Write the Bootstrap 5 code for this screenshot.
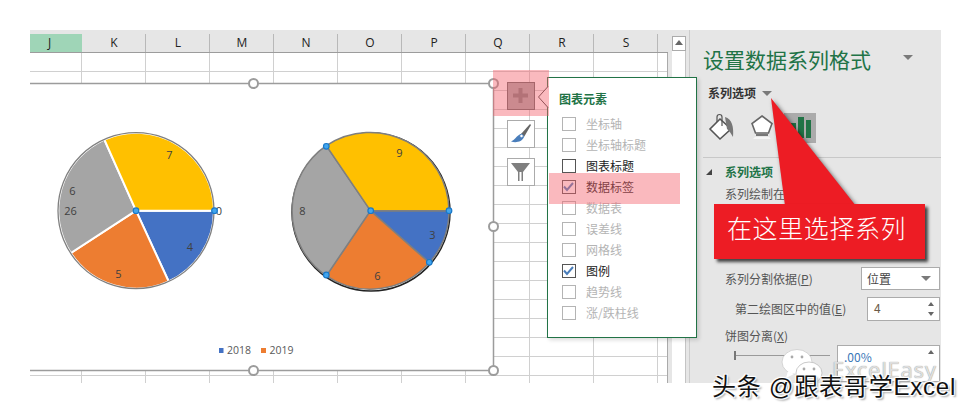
<!DOCTYPE html>
<html lang="zh-CN">
<head>
<meta charset="utf-8">
<title>设置数据系列格式</title>
<link href="https://cdn.jsdelivr.net/npm/bootstrap@5.3.0/dist/css/bootstrap.min.css" rel="stylesheet">
<style>
html,body{margin:0;background:#fff;overflow:hidden}
body{font-family:"Noto Sans CJK SC","Noto Sans",sans-serif;font-size:12px;line-height:18px;color:#444}
.stage{position:relative;width:971px;height:413px;padding:30px;overflow:hidden}
.shot{width:911px;height:353px;overflow:hidden}
.sheet{width:638px;flex:none;background:#e6e6e6;padding-top:4px}
.colhead{height:19px;border-bottom:1.5px solid #9c9c9c}
.colcell{width:64px;flex:none;text-align:center;border-right:1px solid #b8b8b8;font-family:"Open Sans",sans-serif;font-size:12px;line-height:17px;color:#222;padding-left:1px}
.colcell-sel{width:52px;background:#9fd5b7;border-right:0;padding-left:0;padding-right:13px}
.gridbody{height:330px;background-color:#fff;
 background-image:linear-gradient(90deg,#d0d0d0 1px,transparent 1px),linear-gradient(#d0d0d0 1px,transparent 1px);
 background-size:64px 100%,100% 19px;background-position:51px 0,0 18px;border-right:1.5px solid #aaa}
.scrollcol{width:21px;flex:none;background:#e6e6e6;padding:6px 3.5px 0 4px}
.scrollbtn{height:15px;background:#fff;border:1.5px solid #ababab;box-sizing:border-box}
.scrolltri{width:0;height:0;border:4px solid transparent;border-top:0;border-bottom:5px solid #666;margin:3px auto 0}
.scrolltrack{height:332px;background:#fff;border-right:1px solid #c4c4c4}
.fmtpanel{width:252px;flex:none;background:#e6e6e6;border-left:1.5px solid #ccc;padding-top:14px}
.fmttitle{font-size:21px;line-height:30px;color:#217346;padding-left:13px}
.dropcaret{width:0;height:0;border:5px solid transparent;border-top:5px solid #7a7a7a;border-bottom:0}
.caret-title{margin-left:32px;margin-top:-4px}
.subhead{font-weight:700;color:#333;padding-left:18px;margin-top:10px;gap:6px}
.iconrow{height:30px;margin-top:11px;padding-left:18px}
.iconslot{width:32px;height:30px;flex:none}
.iconslot-bucket{margin-right:11px}
.iconslot-penta{margin-right:1px}
.iconslot-sel{background:#ababab}
.fmtsep{height:1px;background:#c8c8c8;margin:14px 0 5px 13px}
.sect{font-weight:700;color:#217346;padding-left:35px;position:relative}
.secttri{position:absolute;left:16px;top:6px;width:0;height:0;border-style:solid;border-width:0 0 6px 6px;border-color:transparent transparent #444 transparent}
.fmtlabel{padding-left:35px;color:#555}
.fmtlabel-in{padding-left:45px}
.fmtrow{padding-right:1px}
.lowrow-a{margin-top:64px}
.lowrow-b{margin-top:7px}
.lowrow-c{margin-top:6px}
.selbox,.spinbox{background:#fff;border:1.5px solid #ababab;box-sizing:border-box}
.selbox{width:79px;height:23px;padding-left:5px;line-height:20px}
.spinbox{width:73px;height:24px;padding-left:6px;line-height:19px;color:#6b5a48}
.spinbox-wide{width:103px;height:37px;color:#3b78b8;padding-left:6px;line-height:21px}
.spinarrows{padding:4px 5px 0 0;gap:6px}
.spintri{width:0;height:0;border:3px solid transparent;border-top:0;border-bottom:4px solid #666}
.spintri-d{border-bottom:0;border-top:4px solid #666}
.sliderwrap{width:96px;height:20px;margin-left:44px}
.slidertick{width:2px;height:9px;background:#777}
.sliderline{height:1px;flex:1;background:#9a9a9a}
.overlay-svg{position:absolute;left:0;top:0;width:971px;height:413px}
.chartbtn{position:absolute;left:507px;width:28px;height:28px;background:#fff;border:1.5px solid #ababab}
.btn-plus{top:82px;background:#aaa;border-color:#666}
.btn-brush{top:120px}
.btn-filter{top:158px}
.chartmenu{position:absolute;left:547px;top:77px;width:150px;height:261px;background:#fff;border:1.5px solid #217346;box-shadow:2px 2px 4px rgba(0,0,0,.15);padding:11px 0 0 14px}
.menutitle{font-weight:700;color:#217346;line-height:20px;margin-bottom:4px;margin-left:-3px}
.menuitem{height:21px;gap:10px;color:#b4b4b4}
.menuitem-on{color:#222}
.chk{width:14px;height:14px;border:1.5px solid #b4b4b4;flex:none;background:#fff}
.menuitem-on .chk{border-color:#555}
.notch{position:absolute;left:537px;top:86px;width:12px;height:22px}
.pinkmask{position:absolute;background:rgba(245,100,110,.45)}
.pink-a{left:493px;top:70px;width:56px;height:46px}
.pink-b{left:549px;top:173px;width:131px;height:31px}
.calloutbox{position:absolute;left:714px;top:204px;width:211px;height:55px;background:#ed1c24;color:#fff;font-size:25px;letter-spacing:.6px;line-height:47px;padding-left:13px;box-shadow:3px 3px 3px #444;font-weight:300;white-space:nowrap}
.callout-arrow{position:absolute;left:0;top:0;width:971px;height:413px;filter:drop-shadow(2px 2px 2px rgba(0,0,0,.55))}
.wechatmark{position:absolute;left:780px;top:348px;width:46px;height:38px}
.easymark{position:absolute;left:832px;top:355px;font-family:"Noto Sans",sans-serif;font-size:22px;line-height:28px;letter-spacing:.7px;color:rgba(235,235,235,.9);text-shadow:0 0 1px #777}
.ttmark{position:absolute;left:712px;top:373px;font-size:24px;letter-spacing:.8px;line-height:28px;color:#111;white-space:nowrap;font-family:"Liberation Sans","Noto Sans CJK SC",sans-serif;text-shadow:1px 1px 1px #fff,-1px -1px 1px #fff,1px -1px 1px #fff,-1px 1px 1px #fff,2px 2px 2px #999}
</style>
</head>
<body>
<div class="stage">
  <div class="shot d-flex">
    <div class="sheet">
      <div class="colhead d-flex">
        <div class="colcell colcell-sel">J</div>
        <div class="colcell">K</div><div class="colcell">L</div><div class="colcell">M</div><div class="colcell">N</div>
        <div class="colcell">O</div><div class="colcell">P</div><div class="colcell">Q</div><div class="colcell">R</div><div class="colcell">S</div>
      </div>
      <div class="gridbody"></div>
    </div>
    <div class="scrollcol">
      <div class="scrollbtn"><div class="scrolltri"></div></div>
      <div class="scrolltrack"></div>
    </div>
    <div class="fmtpanel">
      <div class="d-flex align-items-center">
        <div class="fmttitle">设置数据系列格式</div>
        <div class="dropcaret caret-title"></div>
      </div>
      <div class="subhead d-flex align-items-center">系列选项 <span class="dropcaret"></span></div>
      <div class="iconrow d-flex align-items-center">
        <div class="iconslot iconslot-bucket">
          <svg width="32" height="30" viewBox="0 0 32 30"><path d="M12 6 L23 16 L12 26 L2 16 Z" fill="#fff" stroke="#555" stroke-width="1.6"/><path d="M9 9 V4 a2.500 2.500 0 0 1 5 0 V13" fill="none" stroke="#555" stroke-width="1.2"/><path d="M17 4 C24 6 26 14 25 24 C23 21 22 18 19 16 Z" fill="#777"/></svg>
        </div>
        <div class="iconslot iconslot-penta">
          <svg width="32" height="30" viewBox="0 0 32 30"><path d="M11 3 L21 10.500 L17.500 20 H4.500 L1 10.500 Z" fill="#fff" stroke="#666" stroke-width="1.600"/><path d="M5 22 H17" stroke="#777" stroke-width="2"/><path d="M4 24 L2 26 H20 L18 24 Z" fill="#f5f5f5"/></svg>
        </div>
        <div class="iconslot iconslot-sel">
          <svg width="32" height="30" viewBox="0 0 32 30"><rect x="7" y="10" width="5" height="15" fill="#217346"/><rect x="14" y="4" width="6" height="21" fill="#217346"/><rect x="22" y="7" width="5" height="18" fill="#217346"/></svg>
        </div>
      </div>
      <div class="fmtsep"></div>
      <div class="sect"><span class="secttri"></span>系列选项</div>
      <div class="fmtlabel mt-1">系列绘制在</div>
      <div class="fmtrow d-flex justify-content-between align-items-center lowrow-a">
        <div class="fmtlabel">系列分割依据(<u>P</u>)</div>
        <div class="selbox d-flex justify-content-between align-items-center">位置<span class="dropcaret me-2"></span></div>
      </div>
      <div class="fmtrow d-flex justify-content-between align-items-center lowrow-b">
        <div class="fmtlabel fmtlabel-in">第二绘图区中的值(<u>E</u>)</div>
        <div class="spinbox d-flex justify-content-between">4<div class="spinarrows d-flex flex-column"><span class="spintri"></span><span class="spintri spintri-d"></span></div></div>
      </div>
      <div class="fmtlabel lowrow-c">饼图分离(<u>X</u>)</div>
      <div class="fmtrow d-flex justify-content-between">
        <div class="sliderwrap d-flex align-items-center"><span class="slidertick"></span><span class="sliderline"></span></div>
        <div class="spinbox spinbox-wide d-flex justify-content-between">.00%<div class="spinarrows d-flex flex-column"><span class="spintri"></span></div></div>
      </div>
    </div>
  </div>

  <svg class="overlay-svg" viewBox="0 0 971 413" font-family="'Open Sans',sans-serif">
    <rect x="30" y="83" width="463" height="287" fill="#fff"/>
    <path d="M30 83.500 H493.500 V370.500 H30" fill="none" stroke="#9c9c9c" stroke-width="1.500"/>
    <g stroke="#fff" stroke-width="2">
      <path d="M136 210.700 L214 210.700 A78 78 0 0 1 168.700 281.500 Z" fill="#4472c4"/>
      <path d="M136 210.700 L168.700 281.500 A78 78 0 0 1 70.800 253 Z" fill="#ed7d31"/>
      <path d="M136 210.700 L70.800 253 A78 78 0 0 1 104.300 139.500 Z" fill="#a5a5a5"/>
      <path d="M136 210.700 L104.300 139.500 A78 78 0 0 1 214 210.700 Z" fill="#ffc000"/>
    </g>
    <circle cx="136" cy="210.700" r="78" fill="none" stroke="#808080" stroke-width="1.300"/>
    <circle cx="371" cy="212" r="79" fill="none" stroke="#222" stroke-width="1.500"/>
    <g stroke="#7f7f7f" stroke-width="1.500">
      <path d="M370.500 210.700 L449 210.700 A79 79 0 0 1 429.300 262.800 Z" fill="#4472c4"/>
      <path d="M370.500 210.700 L429.300 262.800 A79 79 0 0 1 326.300 275.800 Z" fill="#ed7d31"/>
      <path d="M370.500 210.700 L326.300 275.800 A79 79 0 0 1 326.300 145.600 Z" fill="#a5a5a5"/>
      <path d="M370.500 210.700 L326.300 145.600 A79 79 0 0 1 449 210.700 Z" fill="#ffc000"/>
    </g>
    <g font-size="11" fill="#404040" text-anchor="middle">
      <text x="169.500" y="159">7</text><text x="72.500" y="195">6</text><text x="70.500" y="215">26</text>
      <text x="190" y="251">4</text><text x="118.500" y="278">5</text><text x="219" y="215">0</text>
      <text x="399.500" y="157">9</text><text x="302.500" y="215">8</text><text x="432.500" y="239">3</text><text x="377.500" y="280">6</text>
    </g>
    <g fill="#41a5ee" stroke="#1a78c8" stroke-width="1.200">
      <circle cx="136" cy="210.700" r="2.800"/><circle cx="214.500" cy="210.700" r="2.800"/>
      <circle cx="370.700" cy="210.700" r="2.800"/><circle cx="449" cy="210.700" r="2.800"/><circle cx="429.300" cy="262.300" r="2.800"/><circle cx="326.300" cy="275" r="2.800"/><circle cx="326.300" cy="146.300" r="2.800"/>
    </g>
    <rect x="219" y="348" width="4.500" height="5" fill="#4472c4"/>
    <rect x="261" y="348" width="5" height="5" fill="#ed7d31"/>
    <g font-size="10.500" fill="#595959">
      <text x="227" y="354">2018</text><text x="269.500" y="354">2019</text>
    </g>
    <g fill="#fff" stroke="#9c9c9c" stroke-width="2">
      <circle cx="253.500" cy="83.500" r="4.500"/><circle cx="493.500" cy="83.500" r="4.500"/><circle cx="493.500" cy="226.500" r="4.500"/><circle cx="493.500" cy="370.500" r="4.500"/><circle cx="253.500" cy="370.500" r="4.500"/>
    </g>
  </svg>

  <div class="chartbtn btn-plus">
    <svg width="25" height="25" viewBox="0 0 25 25"><path d="M10.500 5 H14.500 V10.500 H20 V14.500 H14.500 V20 H10.500 V14.500 H5 V10.500 H10.500 Z" fill="#7f7f7f"/></svg>
  </div>
  <div class="chartbtn btn-brush">
    <svg width="25" height="25" viewBox="0 0 25 25"><path d="M13 13 L22 3 L23 4 L16 16 Z" fill="#666"/><path d="M13 13 L16 16 C14 21 8 22 3 20.500 C7 19 8 15 13 13 Z" fill="#4a7ebb"/><circle cx="13.500" cy="15" r="1.800" fill="#fff" stroke="#4a7ebb"/></svg>
  </div>
  <div class="chartbtn btn-filter">
    <svg width="25" height="25" viewBox="0 0 25 25"><path d="M3 4 H22 L15 13 V22 H10 V13 Z" fill="#7f7f7f"/><path d="M11.500 13 H13.500 V22 H11.500 Z" fill="#fff"/></svg>
  </div>

  <div class="chartmenu">
    <div class="menutitle">图表元素</div>
    <div class="menuitem d-flex align-items-center"><span class="chk"></span>坐标轴</div>
    <div class="menuitem d-flex align-items-center"><span class="chk"></span>坐标轴标题</div>
    <div class="menuitem menuitem-on d-flex align-items-center"><span class="chk"></span>图表标题</div>
    <div class="menuitem menuitem-on d-flex align-items-center"><span class="chk"><svg class="d-block" width="11" height="11" viewBox="0 0 11 11"><path d="M1 5.500 L4 9 L10 2" fill="none" stroke="#4a7ebb" stroke-width="2"/></svg></span>数据标签</div>
    <div class="menuitem d-flex align-items-center"><span class="chk"></span>数据表</div>
    <div class="menuitem d-flex align-items-center"><span class="chk"></span>误差线</div>
    <div class="menuitem d-flex align-items-center"><span class="chk"></span>网格线</div>
    <div class="menuitem menuitem-on d-flex align-items-center"><span class="chk"><svg class="d-block" width="11" height="11" viewBox="0 0 11 11"><path d="M1 5.500 L4 9 L10 2" fill="none" stroke="#4a7ebb" stroke-width="2"/></svg></span>图例</div>
    <div class="menuitem d-flex align-items-center"><span class="chk"></span>趋势线</div>
    <div class="menuitem d-flex align-items-center"><span class="chk"></span>涨/跌柱线</div>
  </div>
  <svg class="notch" viewBox="0 0 12 22"><path d="M11 0.500 L1.500 11 L11 21.500 L12 21.500 V0.500 Z" fill="#fff"/><path d="M11 0.500 L1.500 11 L11 21.500" fill="none" stroke="#444" stroke-width="1"/></svg>
  <div class="pinkmask pink-a"></div>
  <div class="pinkmask pink-b"></div>

  <svg class="callout-arrow" viewBox="0 0 971 413"><path d="M771 98 L785 206 H856 Z" fill="#ed1c24"/></svg>
  <div class="calloutbox">在这里选择系列</div>

  <svg class="wechatmark" viewBox="0 0 46 38">
    <ellipse cx="17" cy="14" rx="15" ry="12.500" fill="#fff" stroke="#ccc" stroke-width=".8"/><path d="M8 23 L6 30 L14 26 Z" fill="#fff"/>
    <ellipse cx="29" cy="25" rx="13" ry="11" fill="#fff" stroke="#bbb" stroke-width=".8"/>
    <g fill="#aaa"><circle cx="12" cy="9" r="1.400"/><circle cx="22" cy="9" r="1.400"/><circle cx="24" cy="21" r="1.400"/><circle cx="34" cy="21" r="1.400"/></g>
  </svg>
  <div class="easymark">ExcelEasy</div>
  <div class="ttmark">头条 @跟表哥学Excel</div>
</div>
</body>
</html>
